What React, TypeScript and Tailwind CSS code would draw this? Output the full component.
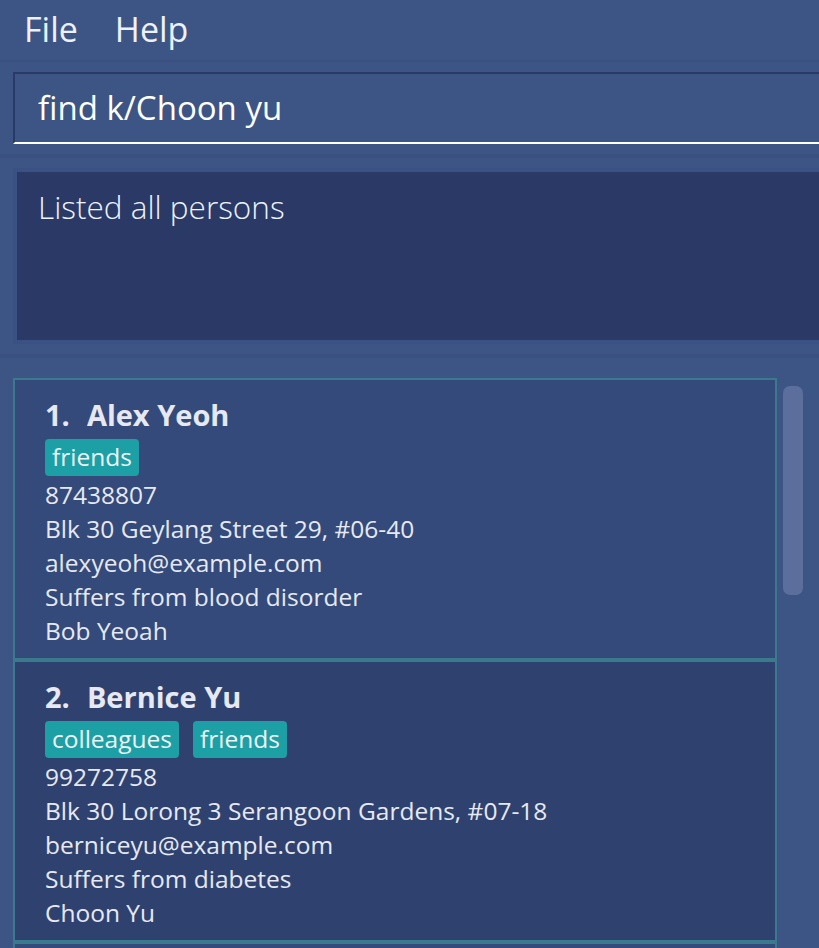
import React from "react";

type Person = {
  name: string;
  tags: string[];
  phone: string;
  address: string;
  email: string;
  remark: string;
  contact: string;
};

const persons: Person[] = [
  {
    name: "Alex Yeoh",
    tags: ["friends"],
    phone: "87438807",
    address: "Blk 30 Geylang Street 29, #06-40",
    email: "alexyeoh@example.com",
    remark: "Suffers from blood disorder",
    contact: "Bob Yeoah",
  },
  {
    name: "Bernice Yu",
    tags: ["colleagues", "friends"],
    phone: "99272758",
    address: "Blk 30 Lorong 3 Serangoon Gardens, #07-18",
    email: "berniceyu@example.com",
    remark: "Suffers from diabetes",
    contact: "Choon Yu",
  },
];

function PersonCard({ person, index }: { person: Person; index: number }) {
  const odd = index % 2 === 0;
  return (
    <div
      className={
        "border-2 border-[#3b7a8c] pl-[30px] pt-[16px] pb-[10px] h-[282px] shrink-0 flex flex-col " +
        (odd ? "bg-[#344a7a]" : "bg-[#2f426f]")
      }
    >
      <div className="h-[36px] flex items-center text-[29px] font-bold text-[#e6e9f2] leading-none">
        <span>{index + 1}.</span>
        <span className="ml-[17px]">{person.name}</span>
      </div>
      <div className="mt-[7px] flex gap-[14px]">
        {person.tags.map((t) => (
          <span
            key={t}
            className="h-[37px] px-[7px] rounded-[4px] bg-[#1ca0a6] text-[#eef3f6] text-[24.5px] flex items-center"
          >
            {t}
          </span>
        ))}
      </div>
      <div className="mt-[2px] text-[24.5px] leading-[34px] text-[#e6e9f2]">
        <div>{person.phone}</div>
        <div>{person.address}</div>
        <div>{person.email}</div>
        <div>{person.remark}</div>
        <div>{person.contact}</div>
      </div>
    </div>
  );
}

export default function App() {
  return (
    <div
      className="w-[819px] h-[948px] overflow-hidden bg-[#3d5585] flex flex-col"
      style={{ fontFamily: '"Open Sans", "Noto Sans", sans-serif' }}
    >
      {/* menu bar */}
      <div className="h-[62px] shrink-0 flex items-center gap-[37px] pl-[24px] pb-[2px] border-b-2 border-[#3a5080] text-[34px] text-[#eef1f7]">
        <span>File</span>
        <span>Help</span>
      </div>

      {/* command box */}
      <div className="shrink-0 pl-[13px] pt-[10px] pb-[10px] border-b-4 border-[#3a5080]">
        <div className="h-[72px] border-t-2 border-l-2 border-b-2 border-t-[#2a3a66] border-l-[#2a3a66] border-b-white flex items-center pl-[23px] text-[33px] text-white">
          find k/Choon yu
        </div>
      </div>

      {/* result display */}
      <div className="shrink-0 pl-[13px] pt-[10px] pb-[10px] border-b-4 border-[#3a5080]">
        <div className="h-[176px] border-4 border-r-0 border-[#3a5283] bg-[#2a3966] pl-[21px] pt-[11px] text-[31.5px] font-light text-[#eef3fa]">
          Listed all persons
        </div>
      </div>

      {/* person list */}
      <div className="flex-1 min-h-0 flex pl-[13px] pt-[20px]">
        <div className="w-[764px] flex flex-col">
          {persons.map((p, i) => (
            <PersonCard key={p.name} person={p} index={i} />
          ))}
          <div className="h-[282px] shrink-0 border-2 border-[#3b7a8c] bg-[#344a7a]" />
        </div>
        <div className="flex-1 pl-[6px] pt-[8px]">
          <div className="w-[20px] h-[209px] rounded-[7px] bg-[#5b6e9c]" />
        </div>
      </div>
    </div>
  );
}
